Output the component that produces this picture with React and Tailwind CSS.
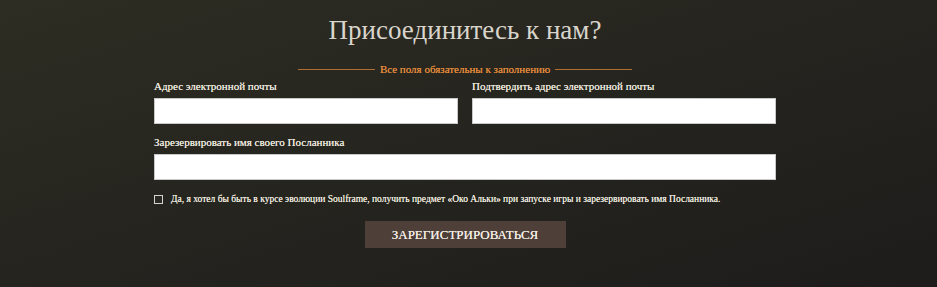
import React from 'react';

const serif = "font-['Liberation_Serif','DejaVu_Serif',serif]";

const Field = ({ label, className = '' }) => (
  <label className={`flex flex-col ${className}`}>
    <span className="text-[11px] leading-[13px] text-[#ebe6dc] mb-[5px] [text-shadow:0_0_0.4px_#ebe6dc]">{label}</span>
    <input type="text" className="h-[26px] w-full bg-white border border-[#c9c9c9] outline-none" />
  </label>
);

const App = () => {
  return (
    <section className={`h-[287px] w-full bg-gradient-to-br from-[#2d2d23] to-[#1d1c1b] ${serif}`}>
      <div className="w-[622px] ml-[154px] pt-[14px]">
        <h1 className="text-center text-[27px] leading-[32px] text-[#d9d5cc]">Присоединитесь к нам?</h1>
        <div className="flex items-center justify-center gap-[5px] mt-[16px]">
          <span className="w-[77px] h-px bg-[#b06e32]" />
          <span className="text-[11px] leading-[14px] text-[#e0873a] [text-shadow:0_0_0.4px_#e0873a]">Все поля обязательны к заполнению</span>
          <span className="w-[77px] h-px bg-[#b06e32]" />
        </div>
        <div className="grid grid-cols-2 gap-x-[14px] mt-[4px]">
          <Field label="Адрес электронной почты" />
          <Field label="Подтвердить адрес электронной почты" />
        </div>
        <Field label="Зарезервировать имя своего Посланника" className="mt-[12px]" />
        <label className="flex items-center gap-[8px] mt-[13px]">
          <span className="w-[9px] h-[9px] border border-[#d8d4cc] bg-[#2a2a24] shrink-0" />
          <span className="text-[9.5px] leading-[12px] text-[#ebe6dc] [text-shadow:0_0_0.4px_#ebe6dc]">
            Да, я хотел бы быть в курсе эволюции Soulframe, получить предмет «Око Альки» при запуске игры и зарезервировать имя Посланника.
          </span>
        </label>
        <div className="flex justify-center mt-[16px]">
          <button className="w-[201px] h-[27px] bg-[#4e4039] text-[13px] text-[#f1ece4] [text-shadow:0_0_0.4px_#f1ece4]">
            ЗАРЕГИСТРИРОВАТЬСЯ
          </button>
        </div>
      </div>
    </section>
  );
};

export default App;
